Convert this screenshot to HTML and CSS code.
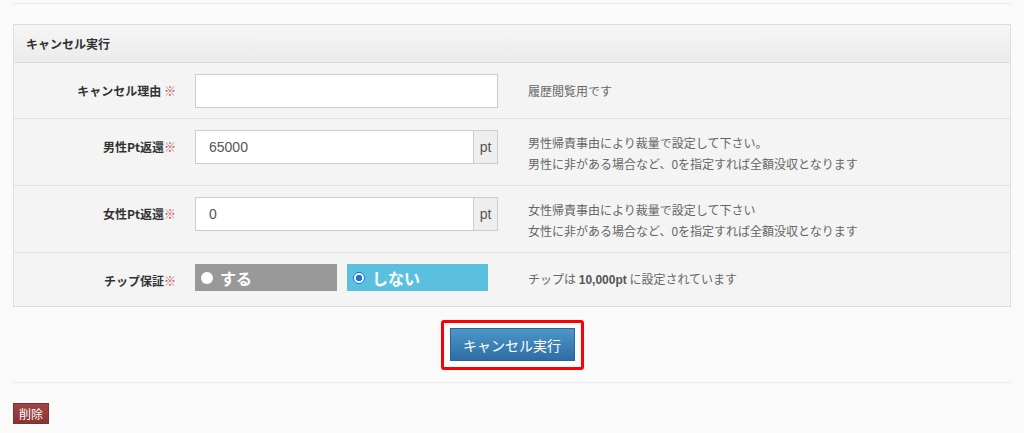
FILE: index.html
```html
<!DOCTYPE html>
<html lang="ja">
<head>
<meta charset="utf-8">
<title>キャンセル実行</title>
<link rel="stylesheet" href="styles.css">
</head>
<body>
<div class="page">
  <div class="topline"></div>
  <div class="panel">
    <div class="panel-head">キャンセル実行</div>
    <div class="row">
      <div class="label">キャンセル理由 <span class="req">※</span></div>
      <div class="field"><input class="input full" type="text" value=""></div>
      <div class="help">履歴閲覧用です</div>
    </div>
    <div class="row">
      <div class="label">男性Pt返還<span class="req">※</span></div>
      <div class="field group"><input class="input" type="text" value="65000"><span class="addon">pt</span></div>
      <div class="help two">男性帰責事由により裁量で設定して下さい。<br>男性に非がある場合など、0を指定すれば全額没収となります</div>
    </div>
    <div class="row">
      <div class="label">女性Pt返還<span class="req">※</span></div>
      <div class="field group"><input class="input" type="text" value="0"><span class="addon">pt</span></div>
      <div class="help two">女性帰責事由により裁量で設定して下さい<br>女性に非がある場合など、0を指定すれば全額没収となります</div>
    </div>
    <div class="row last">
      <div class="label chip">チップ保証<span class="req">※</span></div>
      <div class="field radios">
        <label class="radio off"><span class="dot"></span>する</label>
        <label class="radio on"><span class="dot"></span>しない</label>
      </div>
      <div class="help">チップは <b>10,000pt</b> に設定されています</div>
    </div>
  </div>
  <div class="actions">
    <div class="highlight"><button class="btn-primary" type="button">キャンセル実行</button></div>
  </div>
  <div class="footer">
    <button class="btn-danger" type="button">削除</button>
  </div>
</div>
</body>
</html>
```
FILE: styles.css
```css
html, body {
  margin: 0;
  padding: 0;
  background: #fafafa;
  font-family: "Noto Sans CJK JP", "Liberation Sans", sans-serif;
  font-size: 12px;
  color: #333;
}
.page {
  padding: 0 13px;
}
.topline {
  margin-top: 3px;
  border-top: 1px solid #e8e8e8;
}
.panel {
  margin-top: 20px;
  border: 1px solid #dddddd;
  background: #f4f4f4;
}
.panel-head {
  height: 37px;
  line-height: 37px;
  padding: 0 12px;
  font-weight: bold;
  color: #333;
  background: linear-gradient(to bottom, #f6f6f6 0%, #ebebeb 100%);
  border-bottom: 1px solid #d8d8d8;
}
.row {
  display: grid;
  grid-template-columns: 162px 303px 1fr;
  column-gap: 19px;
  padding: 11px 0 10px;
  border-bottom: 1px solid #e2e2e2;
  align-items: start;
}
.row.last {
  border-bottom: none;
  padding-bottom: 12px;
}
.label {
  text-align: right;
  font-weight: bold;
  line-height: 34px;
  color: #333;
}
.label.chip {
  line-height: 27px;
  padding-top: 3px;
}
.req {
  color: #c0504d;
  font-weight: normal;
}
.field {
  display: flex;
}
.input {
  box-sizing: border-box;
  height: 34px;
  border: 1px solid #cccccc;
  background: #ffffff;
  padding: 0 13px;
  font-family: "Liberation Sans", "Noto Sans CJK JP", sans-serif;
  font-size: 14px;
  color: #555;
  margin: 0;
  outline: none;
  border-radius: 0;
}
.input.full {
  width: 303px;
}
.group .input {
  width: 279px;
}
.addon {
  box-sizing: border-box;
  width: 24px;
  height: 34px;
  line-height: 32px;
  border: 1px solid #cccccc;
  border-left: none;
  background: #eeeeee;
  font-family: "Liberation Sans", sans-serif;
  font-size: 14px;
  color: #555;
  text-align: center;
}
.help {
  margin-left: 11px;
  color: #666;
  line-height: 34px;
  align-self: center;
}
.help.two {
  line-height: 21px;
  padding: 2px 0 1px;
}
.row.last .help {
  line-height: 27px;
}
.help b {
  font-family: "Liberation Sans", sans-serif;
  font-weight: bold;
  color: #555;
}
.radios {
  gap: 10px;
}
.radio {
  box-sizing: border-box;
  width: 142px;
  height: 27px;
  display: flex;
  align-items: center;
  gap: 7px;
  padding-left: 6px;
  color: #fff;
  font-weight: bold;
  font-size: 16px;
}
.radio.off {
  background: #999999;
}
.radio.on {
  background: #5bc0de;
  width: 141px;
}
.dot {
  box-sizing: border-box;
  width: 12px;
  height: 12px;
  border-radius: 50%;
  background: #ffffff;
  flex: none;
}
.radio.on .dot {
  border: 1px solid #1a73e8;
  background: radial-gradient(circle, #1a6ff0 0 3px, #ffffff 3.5px);
}
.actions {
  display: flex;
  justify-content: center;
  padding: 13px 0 12px;
  border-bottom: 1px solid #ebebeb;
}
.highlight {
  border: 3px solid #ff0000;
  border-radius: 3px;
  padding: 5px 6px 6px;
  background: #fdfdfd;
}
.btn-primary {
  display: block;
  width: 125px;
  height: 33px;
  border: 1px solid #2b669a;
  background: linear-gradient(to bottom, #4b97c8 0%, #2e6da4 100%);
  color: #fff;
  font-family: "Noto Sans CJK JP", sans-serif;
  font-size: 14px;
  padding: 0;
  border-radius: 0;
}
.footer {
  padding-top: 20px;
}
.btn-danger {
  display: block;
  width: 36px;
  height: 21px;
  padding: 0;
  border: 1px solid #7e2f2f;
  background: linear-gradient(to bottom, #a04444 0%, #8a3434 100%);
  color: #fff;
  font-family: "Noto Sans CJK JP", sans-serif;
  font-size: 12px;
  border-radius: 0;
}
```
